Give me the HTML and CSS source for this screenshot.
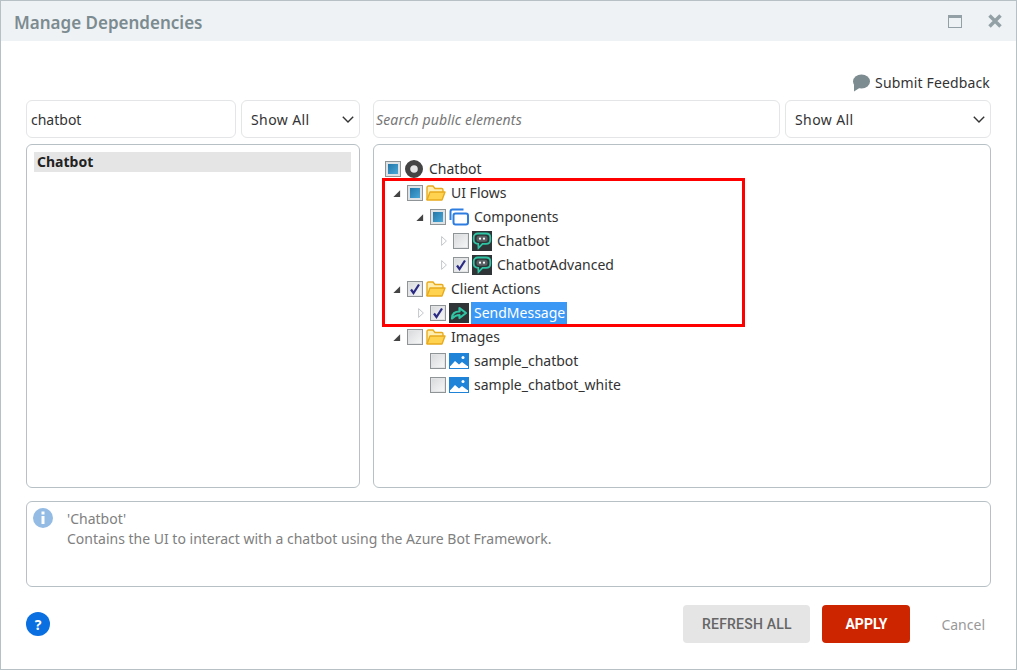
FILE: index.html
```html
<!DOCTYPE html>
<html lang="en">
<head>
	<meta charset="UTF-8">
	<title>Manage Dependencies</title>
	<link rel="stylesheet" href="styles.css">
</head>
<body>
	<svg class="defs" width="0" height="0">
		<symbol id="folder" viewBox="0 0 20 18">
			<path d="M1 16V3.500C1 2.700 1.600 2 2.400 2H7l2 2.500h6.600c.8 0 1.400.6 1.400 1.400V8" fill="#ffeeb0" stroke="#e8ab1e" stroke-width="1.400"/>
			<path d="M1 16l3-8h15l-3 8z" fill="#ffd34f" stroke="#e8ab1e" stroke-width="1.400" stroke-linejoin="round"/>
		</symbol>
		<symbol id="bot" viewBox="0 0 20 20">
			<rect width="20" height="20" fill="#2f3436"/>
			<path d="M6 2.500h8c2.600 0 4.300 1.700 4.300 4v2.200c0 2.400-1.700 4.100-4.300 4.100h-3.500L6.500 17l-.3-4.200C3.500 12.600 1.700 11.100 1.700 8.700V6.500c0-2.300 1.700-4 4.300-4z" fill="none" stroke="#2fc4a4" stroke-width="1.800"/>
			<rect x="4.500" y="4.700" width="11" height="6" rx="2.500" fill="#5b6266"/>
			<circle cx="8" cy="7.700" r="1.100" fill="#fff"/>
			<circle cx="12" cy="7.700" r="1.100" fill="#fff"/>
		</symbol>
		<symbol id="image" viewBox="0 0 20 16">
			<rect width="20" height="16" fill="#1f83d8"/>
			<rect x="1" y="13" width="18" height="2" fill="#fff"/>
			<path d="M1 13.500l5-5.500 4 3.500 3-2.500 6 4.500z" fill="#fff"/>
			<circle cx="14" cy="4.500" r="1.500" fill="#fff"/>
		</symbol>
		<symbol id="arrow-open" viewBox="0 0 10 10">
			<path d="M9 1.500V9H1.500z" fill="#444"/>
		</symbol>
		<symbol id="arrow-closed" viewBox="0 0 10 14">
			<path d="M2 1.500L8 7l-6 5.500z" fill="#fff" stroke="#b4b9bc"/>
		</symbol>
		<symbol id="tick" viewBox="0 0 12 12">
			<path d="M2 6.500l2.500 3.500L10 1.500" fill="none" stroke="#2a2a85" stroke-width="2.200"/>
		</symbol>
	</svg>

	<div class="dialog">
		<div class="titlebar">
			<span class="title">Manage Dependencies</span>
			<div class="window-btns">
				<svg width="14" height="13" viewBox="0 0 14 13"><rect x=".5" y=".5" width="13" height="12" fill="none" stroke="#93a1a6"/><rect width="14" height="3" fill="#93a1a6"/></svg>
				<svg width="14" height="14" viewBox="0 0 14 14"><path d="M1.500 1.500l11 11M12.500 1.500l-11 11" stroke="#93a1a6" stroke-width="3.500"/></svg>
			</div>
		</div>

		<div class="content">
			<div class="feedback">
				<svg width="18" height="18" viewBox="0 0 18 18"><ellipse cx="9.500" cy="7.500" rx="8.500" ry="7" fill="#7d8c90"/><path d="M2 10v7.500l7-4.500z" fill="#7d8c90"/></svg>
				<span>Submit Feedback</span>
			</div>

			<div class="columns">
				<div class="col-left">
					<div class="filters">
						<input class="field field-search" type="text" value="chatbot">
						<div class="field select select-left">
							<span>Show All</span>
							<svg width="12" height="7" viewBox="0 0 12 7"><path d="M.8.8L6 6l5.200-5.200" fill="none" stroke="#333" stroke-width="1.400"/></svg>
						</div>
					</div>
					<div class="panel module-list">
						<div class="module-item">Chatbot</div>
					</div>
				</div>

				<div class="col-right">
					<div class="filters">
						<input class="field field-public" type="text" placeholder="Search public elements">
						<div class="field select select-right">
							<span>Show All</span>
							<svg width="12" height="7" viewBox="0 0 12 7"><path d="M.8.8L6 6l5.200-5.200" fill="none" stroke="#333" stroke-width="1.400"/></svg>
						</div>
					</div>
					<div class="panel tree">
						<div class="highlight"></div>

						<div class="row lv0">
							<span class="check mixed"></span>
							<svg class="icon-module" width="18" height="18" viewBox="0 0 18 18"><circle cx="9" cy="9" r="6.400" fill="#e4e4e4" stroke="#444" stroke-width="5.200"/></svg>
							<span class="label label-root">Chatbot</span>
						</div>
						<div class="row lv1">
							<span class="toggle"><svg width="9" height="9"><use href="#arrow-open"/></svg></span>
							<span class="check mixed"></span>
							<svg class="icon" width="20" height="18"><use href="#folder"/></svg>
							<span class="label">UI Flows</span>
						</div>
						<div class="row lv2">
							<span class="toggle"><svg width="9" height="9"><use href="#arrow-open"/></svg></span>
							<span class="check mixed"></span>
							<svg class="icon" width="20" height="18" viewBox="0 0 20 18"><path d="M1.500 12V3.500C1.500 2.300 2.300 1.500 3.500 1.500h11" fill="none" stroke="#2d7de0" stroke-width="2"/><rect x="4.500" y="5.500" width="14.500" height="11" rx="2" fill="#fff" stroke="#2d7de0" stroke-width="2"/></svg>
							<span class="label">Components</span>
						</div>
						<div class="row lv3">
							<span class="toggle toggle-closed"><svg width="8" height="12"><use href="#arrow-closed"/></svg></span>
							<span class="check"></span>
							<svg class="icon" width="20" height="20"><use href="#bot"/></svg>
							<span class="label">Chatbot</span>
						</div>
						<div class="row lv3">
							<span class="toggle toggle-closed"><svg width="8" height="12"><use href="#arrow-closed"/></svg></span>
							<span class="check"><svg width="12" height="12"><use href="#tick"/></svg></span>
							<svg class="icon" width="20" height="20"><use href="#bot"/></svg>
							<span class="label">ChatbotAdvanced</span>
						</div>
						<div class="row lv1">
							<span class="toggle"><svg width="9" height="9"><use href="#arrow-open"/></svg></span>
							<span class="check"><svg width="12" height="12"><use href="#tick"/></svg></span>
							<svg class="icon" width="20" height="18"><use href="#folder"/></svg>
							<span class="label">Client Actions</span>
						</div>
						<div class="row lv2">
							<span class="toggle toggle-closed"><svg width="8" height="12"><use href="#arrow-closed"/></svg></span>
							<span class="check"><svg width="12" height="12"><use href="#tick"/></svg></span>
							<svg class="icon" width="20" height="20" viewBox="0 0 20 20"><rect width="20" height="20" fill="#2f3436"/><path d="M3 15.500c0-5 3-7 7.500-7V5l6.500 5-6.500 5v-3c-3 0-5 1-7.500 3.500z" fill="none" stroke="#2fc4a4" stroke-width="2.200" stroke-linejoin="round"/></svg>
							<span class="label selected">SendMessage</span>
						</div>
						<div class="row lv1">
							<span class="toggle"><svg width="9" height="9"><use href="#arrow-open"/></svg></span>
							<span class="check"></span>
							<svg class="icon" width="20" height="18"><use href="#folder"/></svg>
							<span class="label">Images</span>
						</div>
						<div class="row lv2">
							<span class="toggle"></span>
							<span class="check"></span>
							<svg class="icon" width="20" height="16"><use href="#image"/></svg>
							<span class="label">sample_chatbot</span>
						</div>
						<div class="row lv2">
							<span class="toggle"></span>
							<span class="check"></span>
							<svg class="icon" width="20" height="16"><use href="#image"/></svg>
							<span class="label">sample_chatbot_white</span>
						</div>
					</div>
				</div>
			</div>

			<div class="info">
				<svg class="info-icon" width="20" height="20" viewBox="0 0 20 20"><circle cx="10" cy="10" r="10" fill="#93bbe4"/><rect x="8.500" y="8" width="3" height="8" fill="#fff"/><rect x="8.500" y="3.500" width="3" height="3" fill="#fff"/></svg>
				<div class="info-text">
					<div>'Chatbot'</div>
					<div>Contains the UI to interact with a chatbot using the Azure Bot Framework.</div>
				</div>
			</div>

			<div class="footer">
				<span class="help">?</span>
				<div class="actions">
					<button class="btn btn-grey">REFRESH ALL</button>
					<button class="btn btn-red">APPLY</button>
					<span class="cancel">Cancel</span>
				</div>
			</div>
		</div>
	</div>
</body>
</html>
```

FILE: styles.css
```css
*{
	margin: 0;
	padding: 0;
	box-sizing: border-box;
}
body{
	font-family: "Noto Sans", "Open Sans", sans-serif;
	font-size: 14px;
	color: #333;
	background: #fff;
}
.defs{
	position: absolute;
}
.dialog{
	width: 1017px;
	height: 670px;
	border: 1px solid #b7c1c5;
	display: flex;
	flex-direction: column;
}

.titlebar{
	height: 40px;
	flex: none;
	background: #eef2f5;
	display: flex;
	align-items: center;
	justify-content: space-between;
	padding: 2px 14px 0 13px;
}
.title{
	font-size: 17px;
	font-weight: 600;
	color: #7c8b90;
}
.window-btns{
	display: flex;
	align-items: center;
	gap: 26px;
	margin-top: -2px;
}

.content{
	flex: 1;
	padding: 0 25px;
	display: flex;
	flex-direction: column;
}
.feedback{
	height: 59px;
	flex: none;
	display: flex;
	align-items: flex-end;
	justify-content: flex-end;
	gap: 5px;
	line-height: 19px;
	padding: 0 1px 8px 0;
	letter-spacing: .15px;
}

.columns{
	display: flex;
	gap: 13px;
	height: 388px;
	flex: none;
}
.col-left{
	width: 334px;
	display: flex;
	flex-direction: column;
	gap: 6px;
}
.col-right{
	width: 618px;
	display: flex;
	flex-direction: column;
	gap: 6px;
}
.filters{
	display: flex;
	gap: 5px;
	height: 38px;
	flex: none;
}
.field{
	height: 38px;
	border: 1px solid #e3e5e6;
	border-radius: 6px;
	background: #fff;
	font: inherit;
	color: #333;
	outline: none;
}
.field-search{
	width: 210px;
	padding: 0 4px;
}
.field-public{
	width: 407px;
	padding: 0 2px;
	letter-spacing: .15px;
}
.field-public::placeholder{
	font-style: italic;
	color: #777;
}
.select{
	display: flex;
	align-items: center;
	justify-content: space-between;
	padding: 0 5px 0 9px;
	letter-spacing: .4px;
}
.select-left{
	width: 119px;
}
.select-right{
	width: 206px;
}
.panel{
	flex: 1;
	border: 1px solid #b7c1c5;
	border-radius: 6px;
	background: #fff;
}
.module-list{
	padding: 7px 8px 7px 7px;
}
.module-item{
	height: 20px;
	line-height: 20px;
	background: #e5e5e5;
	padding-left: 3px;
	font-weight: 700;
	color: #222;
}

.tree{
	position: relative;
	padding-top: 12px;
}
.highlight{
	position: absolute;
	left: 8px;
	top: 33px;
	width: 363px;
	height: 149px;
	border: 3px solid #f00;
}
.row{
	height: 24px;
	display: flex;
	align-items: center;
}
.lv0{
	padding-left: 11px;
}
.lv1{
	padding-left: 15px;
}
.lv2{
	padding-left: 38px;
}
.lv3{
	padding-left: 61px;
}
.toggle{
	width: 18px;
	flex: none;
	display: flex;
	align-items: center;
	padding-left: 3px;
}
.toggle-closed{
	padding-left: 5px;
}
.check{
	width: 16px;
	height: 16px;
	flex: none;
	border: 1px solid #8f9496;
	background: linear-gradient(135deg, #d6d9db, #f8f8f8);
	box-shadow: inset 0 0 0 1px #e2e4e5;
	display: flex;
	align-items: center;
	justify-content: center;
}
.check.mixed{
	background: #e3e6e8;
	box-shadow: inset 0 0 0 2px #dfe2e4;
}
.check.mixed::after{
	content: "";
	width: 10px;
	height: 10px;
	background: linear-gradient(135deg, #2376a8, #48a8d8);
}
.icon{
	flex: none;
	margin-left: 3px;
}
.icon-module{
	flex: none;
	margin-left: 4px;
}
.label{
	margin-left: 4px;
	line-height: 22px;
	padding: 0 1px;
	white-space: nowrap;
}
.label-root{
	margin-left: 5px;
}
.selected{
	background: #3c98f5;
	color: #fff;
	margin-left: 2px;
	padding: 0 2px 0 3px;
}

.info{
	height: 86px;
	flex: none;
	margin-top: 13px;
	border: 1px solid #b7c1c5;
	border-radius: 6px;
	padding: 6px;
	display: flex;
	gap: 14px;
	color: #808080;
}
.info-icon{
	flex: none;
}
.info-text{
	line-height: 20px;
	padding-top: 1px;
}

.footer{
	flex: 1;
	display: flex;
	align-items: flex-start;
	justify-content: space-between;
	padding-top: 18px;
}
.help{
	width: 24px;
	height: 24px;
	margin-top: 7px;
	border-radius: 50%;
	background: #0a6fe0;
	color: #fff;
	font-weight: 700;
	font-size: 14px;
	display: flex;
	align-items: center;
	justify-content: center;
}
.actions{
	display: flex;
	align-items: center;
}
.btn{
	height: 38px;
	border: none;
	border-radius: 4px;
	font-family: "Roboto", sans-serif;
	font-size: 14px;
	font-weight: 500;
}
.btn-grey{
	width: 127px;
	background: #e5e5e5;
	color: #666;
	letter-spacing: .2px;
}
.btn-red{
	width: 88px;
	margin-left: 12px;
	background: #cc2500;
	color: #fff;
	font-weight: 700;
}
.cancel{
	margin-left: 31px;
	margin-right: 6px;
	color: #999;
}
```
